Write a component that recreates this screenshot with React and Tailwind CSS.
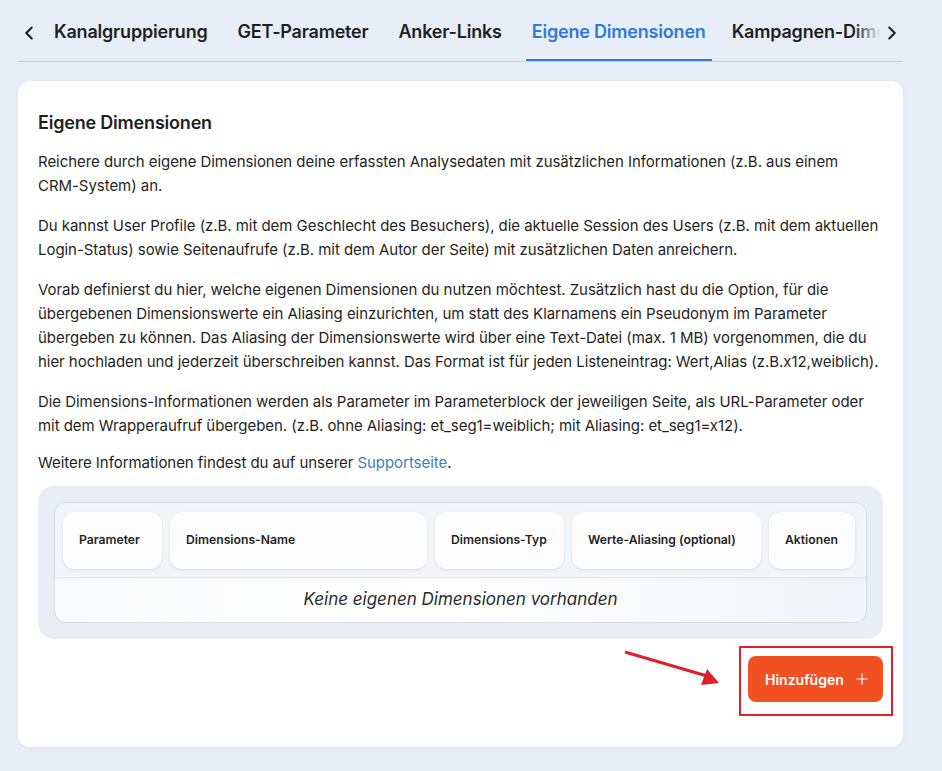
import { ChevronLeft, ChevronRight, Plus } from "lucide-react";

// ── Tab bar data ──
const tabs = [
  { label: "Kanalgruppierung" },
  { label: "GET-Parameter" },
  { label: "Anker-Links" },
  { label: "Eigene Dimensionen", active: true },
  { label: "Kampagnen-Dimensionen" },
];

const columns = [
  { label: "Parameter", w: "w-[99px]" },
  { label: "Dimensions-Name", w: "w-[257px]" },
  { label: "Dimensions-Typ", w: "w-[129px]" },
  { label: "Werte-Aliasing (optional)", w: "w-[189px]" },
  { label: "Aktionen", w: "w-[86px]" },
];

function TabBar() {
  return (
    <div className="flex items-stretch h-[62px] border-b border-[#c9d0d9]">
      <button className="w-[22px] pt-[4px] flex items-center justify-center text-[#1f1f1f]">
        <ChevronLeft size={22} strokeWidth={2.3} />
      </button>
      <div className="relative flex-1 overflow-hidden ml-[8px]">
        <div className="flex gap-[18px] h-full whitespace-nowrap">
          {tabs.map((t) => (
            <div
              key={t.label}
              className={
                "px-[6px] pt-[4px] flex items-center text-[18px] font-semibold tracking-[-0.2px] border-b-[3px] -mb-[1px] " +
                (t.active
                  ? "text-[#2f7ad6] border-[#2f7ad6] mr-[-4px]"
                  : "text-[#1f1f1f] border-transparent")
              }
            >
              {t.label}
            </div>
          ))}
        </div>
        <div className="absolute right-0 top-0 h-full w-[28px] bg-gradient-to-r from-[#e7eef7]/0 to-[#e7eef7]" />
      </div>
      <button className="w-[22px] pt-[4px] flex items-center justify-center text-[#1f1f1f]">
        <ChevronRight size={22} strokeWidth={2.3} />
      </button>
    </div>
  );
}

export default function App() {
  return (
    <div className="min-h-screen bg-[#e7eef7] pl-[18px] pr-[39px] pb-6 font-['Inter',sans-serif]">
      {/* ── Tabs ── */}
      <TabBar />

      {/* ── Card ── */}
      <div className="mt-[19px] bg-white rounded-[12px] shadow-[0_1px_4px_rgba(0,0,0,0.06)] px-[20px] pt-[28px] pb-[45px]">
        <h2 className="text-[18px] leading-[28px] font-semibold text-[#1f1f1f] tracking-[-0.2px]">
          Eigene Dimensionen
        </h2>

        <div className="text-[15px] leading-[24px] text-[#1f1f1f] tracking-[-0.05px]">
          <p className="mt-[13px]">
            Reichere durch eigene Dimensionen deine erfassten Analysedaten mit zusätzlichen Informationen (z.B. aus einem CRM-System) an.
          </p>
          <p className="mt-4">
            Du kannst User Profile (z.B. mit dem Geschlecht des Besuchers), die aktuelle Session des Users (z.B. mit dem aktuellen Login-Status) sowie Seitenaufrufe (z.B. mit dem Autor der Seite) mit zusätzlichen Daten anreichern.
          </p>
          <p className="mt-4">
            Vorab definierst du hier, welche eigenen Dimensionen du nutzen möchtest. Zusätzlich hast du die Option, für die übergebenen Dimensionswerte ein Aliasing einzurichten, um statt des Klarnamens ein Pseudonym im Parameter übergeben zu können. Das Aliasing der Dimensionswerte wird über eine Text-Datei (max. 1 MB) vorgenommen, die du hier hochladen und jederzeit überschreiben kannst. Das Format ist für jeden Listeneintrag: Wert,Alias (z.B.x12,weiblich).
          </p>
          <p className="mt-4">
            Die Dimensions-Informationen werden als Parameter im Parameterblock der jeweiligen Seite, als URL-Parameter oder mit dem Wrapperaufruf übergeben. (z.B. ohne Aliasing: et_seg1=weiblich; mit Aliasing: et_seg1=x12).
          </p>
          <p className="mt-[13px]">
            Weitere Informationen findest du auf unserer{" "}
            <a className="text-[#3b7fc4]">Supportseite</a>.
          </p>
        </div>

        {/* ── Table ── */}
        <div className="mt-[11px] bg-[#e9eef4] rounded-[16px] p-4">
          <div className="rounded-[12px] border border-[#d6dde6] bg-gradient-to-r from-[#fafbfc] via-[#ffffff] to-[#f1f4f8] overflow-hidden">
            <div className="flex gap-[8px] px-[8px] pt-[9px] pb-[8px] bg-[#f2f5f8] border-b border-[#e2e7ee] shadow-[0_2px_4px_rgba(0,0,0,0.03)]">
              {columns.map((c) => (
                <div
                  key={c.label}
                  className={
                    c.w +
                    " h-[57px] flex items-center px-4 bg-[#fdfdfe] rounded-[12px] shadow-[0_1px_3px_rgba(0,0,0,0.09)] text-[12.2px] font-semibold text-[#1f1f1f] whitespace-nowrap"
                  }
                >
                  {c.label}
                </div>
              ))}
            </div>
            <div className="h-[44px] flex items-center justify-center italic text-[17px] text-[#2a2a2a]">
              Keine eigenen Dimensionen vorhanden
            </div>
          </div>
        </div>

        {/* ── Action ── */}
        <div className="mt-[17px] flex justify-end">
          <div className="relative">
            <button className="h-[46px] w-[135px] flex items-center justify-between pl-[17px] pr-[12px] rounded-[8px] bg-[#f15122] text-white text-[14px] font-semibold">
              Hinzufügen
              <Plus size={18} strokeWidth={1.5} />
            </button>
            {/* annotation box */}
            <div className="absolute -left-[9px] -right-[10px] -top-[10px] -bottom-[14px] border-2 border-[#e0202a] pointer-events-none" />
            {/* annotation arrow */}
            <svg
              className="absolute -left-[125px] -top-[6px]"
              width="100"
              height="40"
              viewBox="0 0 100 40"
            >
              <line x1="2" y1="2" x2="84" y2="26" stroke="#e0202a" strokeWidth="3" />
              <polygon points="96,33 78,35 84,19" fill="#e0202a" />
            </svg>
          </div>
        </div>
      </div>
    </div>
  );
}
